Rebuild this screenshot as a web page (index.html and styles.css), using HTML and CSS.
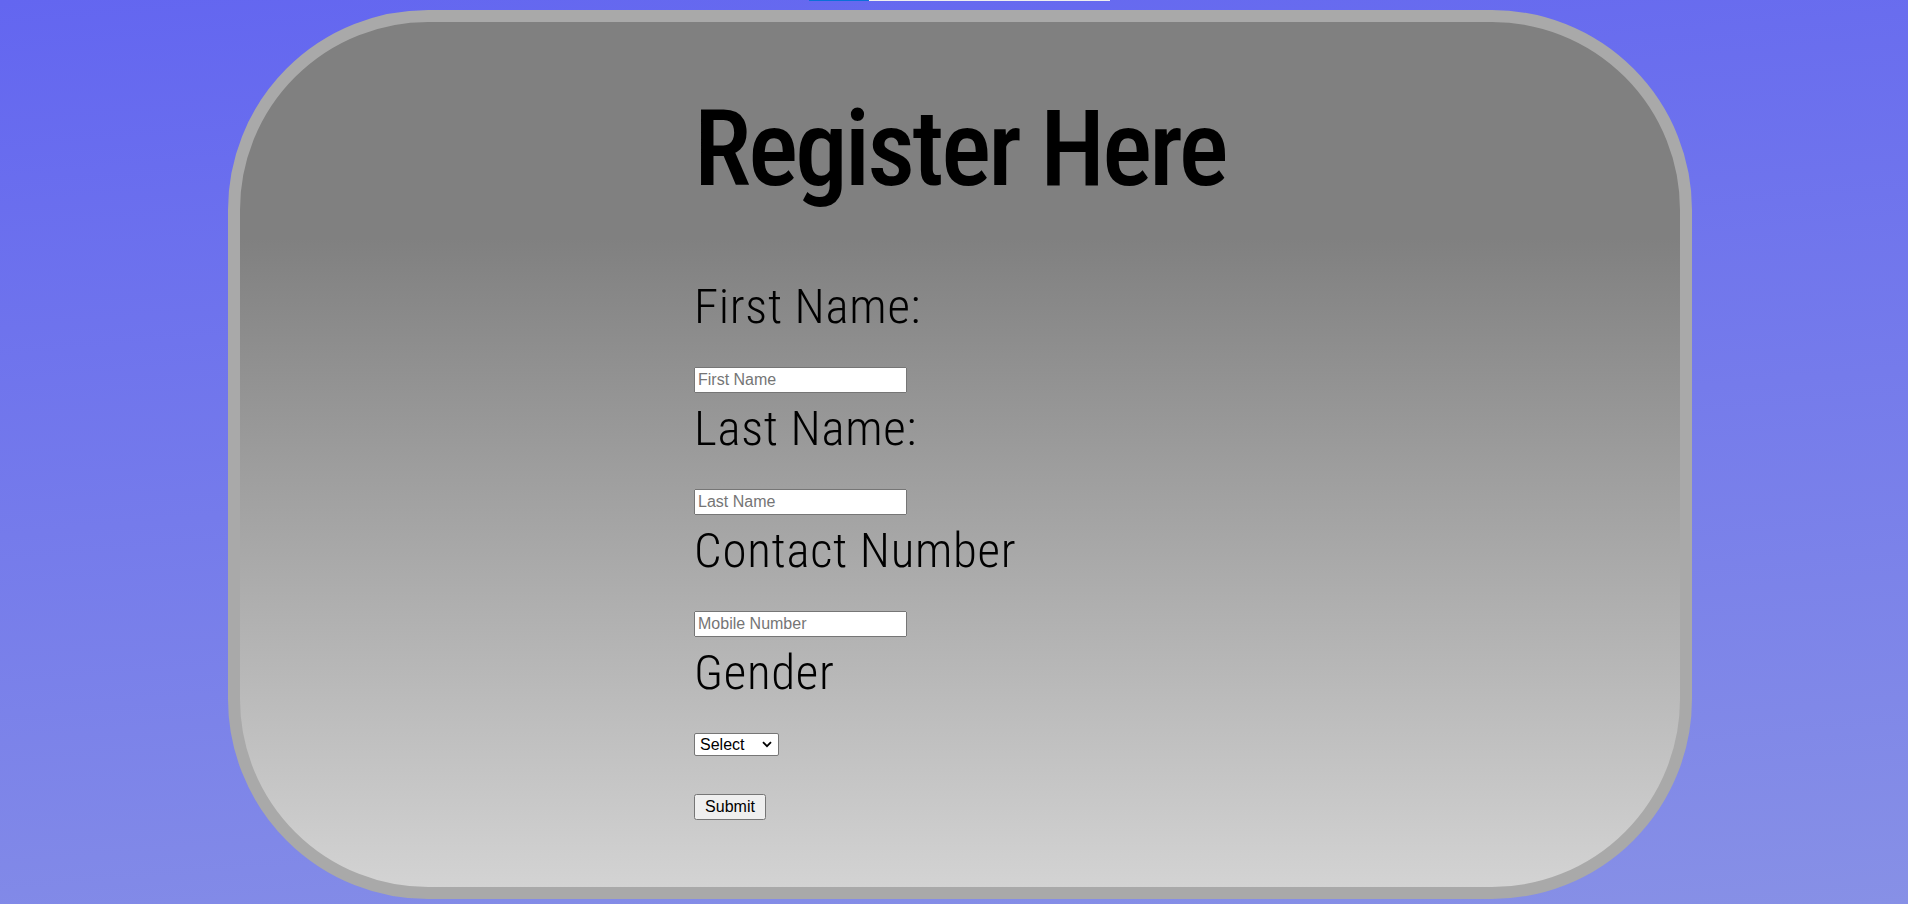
FILE: index.html
```html
<!DOCTYPE html>
<html lang="en">
<head>
<meta charset="utf-8">
<title>Register Here</title>
<link rel="stylesheet" href="styles.css">
</head>
<body>
<div class="topstrip"><div class="topstrip-fill"></div></div>
<div class="card">
  <form class="form">
    <h1 class="title">Register Here</h1>
    <div class="row">
      <label class="label" for="fn">First Name:</label>
      <input class="field" id="fn" type="text" placeholder="First Name">
    </div>
    <div class="row">
      <label class="label" for="ln">Last Name:</label>
      <input class="field" id="ln" type="text" placeholder="Last Name">
    </div>
    <div class="row">
      <label class="label" for="mn">Contact Number</label>
      <input class="field" id="mn" type="text" placeholder="Mobile Number">
    </div>
    <div class="row">
      <label class="label" for="gd">Gender</label>
      <div class="select-wrap">
        <select class="choice" id="gd">
          <option>Select</option>
          <option>Male</option>
          <option>Female</option>
        </select>
        <svg class="chevron" width="10" height="7" viewBox="0 0 10 7" aria-hidden="true"><path d="M1 1.2 L5 5.2 L9 1.2" fill="none" stroke="#000" stroke-width="1.8"/></svg>
      </div>
    </div>
    <button class="submit" type="button">Submit</button>
  </form>
</div>
</body>
</html>
```

FILE: styles.css
```css
html, body {
  margin: 0;
  padding: 0;
}
body {
  width: 1908px;
  height: 904px;
  overflow: hidden;
  background: linear-gradient(175deg, #6366f0 0%, #8790e6 100%);
  font-family: "Roboto Condensed", "DejaVu Sans Condensed", sans-serif;
}
.topstrip {
  height: 1px;
  width: 301px;
  margin-left: 809px;
  background: #efefef;
  display: flex;
}
.topstrip-fill {
  width: 60px;
  background: #0b6fd8;
}
.card {
  box-sizing: border-box;
  margin: 9px 0 0 228px;
  width: 1464px;
  height: 889px;
  border: 12px solid #a9a9a9;
  border-radius: 200px;
  background: linear-gradient(#808080 25%, #d3d3d3 100%);
  padding: 0 0 0 454px;
}
.form {
  display: flex;
  flex-direction: column;
  align-items: flex-start;
}
.title {
  margin: 66px 0 68px;
  font-size: 105px;
  font-weight: 500;
  letter-spacing: -2.8px;
  line-height: 123px;
}
.row {
  display: flex;
  flex-direction: column;
  align-items: flex-start;
  margin-bottom: 8px;
}
.label {
  font-size: 49px;
  font-weight: 300;
  letter-spacing: 0.7px;
  line-height: 56px;
  color: #000;
  margin-bottom: 32px;
}
.field {
  box-sizing: border-box;
  width: 213px;
  height: 26px;
  font-family: "Liberation Sans", Arial, sans-serif;
  font-size: 16px;
  margin: 0;
}
.select-wrap {
  position: relative;
  display: flex;
}
.choice {
  box-sizing: border-box;
  appearance: none;
  -webkit-appearance: none;
  width: 85px;
  height: 23px;
  padding: 0 0 0 5px;
  border: 1px solid #767676;
  border-radius: 2px;
  background: #fff;
  color: #000;
  font-family: "Liberation Sans", Arial, sans-serif;
  font-size: 16px;
  margin: 0;
}
.chevron {
  position: absolute;
  right: 7px;
  top: 8px;
  pointer-events: none;
}
.submit {
  box-sizing: border-box;
  margin-top: 30px;
  width: 72px;
  height: 26px;
  font-family: "Liberation Sans", Arial, sans-serif;
  font-size: 16px;
  padding: 0;
}
```
